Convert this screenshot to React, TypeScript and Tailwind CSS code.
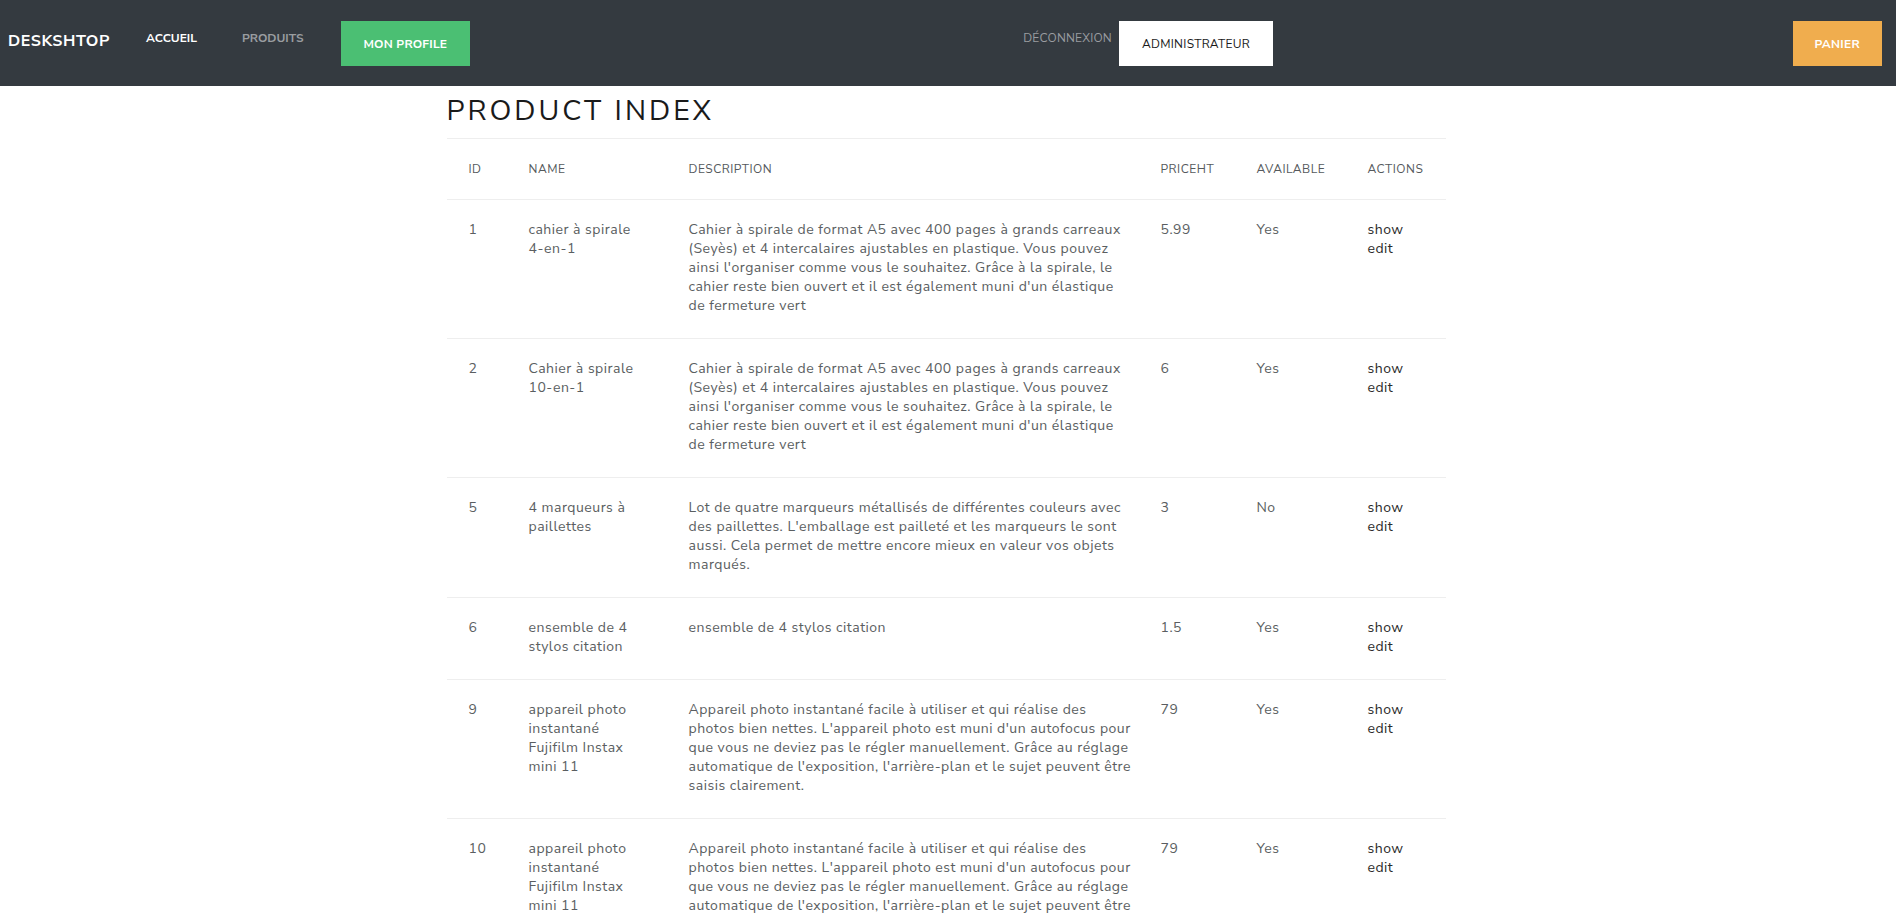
import React from "react";

type Row = {
  id: string;
  name: string[];
  desc: string[];
  price: string;
  available: string;
};

const spirale = [
  "Cahier à spirale de format A5 avec 400 pages à grands carreaux",
  "(Seyès) et 4 intercalaires ajustables en plastique. Vous pouvez",
  "ainsi l'organiser comme vous le souhaitez. Grâce à la spirale, le",
  "cahier reste bien ouvert et il est également muni d'un élastique",
  "de fermeture vert",
];

const appareil = [
  "Appareil photo instantané facile à utiliser et qui réalise des",
  "photos bien nettes. L'appareil photo est muni d'un autofocus pour",
  "que vous ne deviez pas le régler manuellement. Grâce au réglage",
  "automatique de l'exposition, l'arrière-plan et le sujet peuvent être",
  "saisis clairement.",
];

const rows: Row[] = [
  { id: "1", name: ["cahier à spirale", "4-en-1"], desc: spirale, price: "5.99", available: "Yes" },
  { id: "2", name: ["Cahier à spirale", "10-en-1"], desc: spirale, price: "6", available: "Yes" },
  {
    id: "5",
    name: ["4 marqueurs à", "paillettes"],
    desc: [
      "Lot de quatre marqueurs métallisés de différentes couleurs avec",
      "des paillettes. L'emballage est pailleté et les marqueurs le sont",
      "aussi. Cela permet de mettre encore mieux en valeur vos objets",
      "marqués.",
    ],
    price: "3",
    available: "No",
  },
  {
    id: "6",
    name: ["ensemble de 4", "stylos citation"],
    desc: ["ensemble de 4 stylos citation"],
    price: "1.5",
    available: "Yes",
  },
  {
    id: "9",
    name: ["appareil photo", "instantané", "Fujifilm Instax", "mini 11"],
    desc: appareil,
    price: "79",
    available: "Yes",
  },
  {
    id: "10",
    name: ["appareil photo", "instantané", "Fujifilm Instax", "mini 11"],
    desc: appareil,
    price: "79",
    available: "Yes",
  },
];

const font = { fontFamily: '"Nunito Sans", Lato, "Open Sans", sans-serif' };

function Lines({ lines }: { lines: string[] }) {
  return (
    <>
      {lines.map((l, i) => (
        <span key={i} className="block whitespace-nowrap">
          {l}
        </span>
      ))}
    </>
  );
}

export default function App() {
  return (
    <div className="min-h-screen bg-white" style={font}>
      <nav className="flex h-[86px] items-start bg-[#343a40]">
        <div className="mt-[31px] pl-[8px] text-[16px] font-bold leading-[20px] tracking-[0.6px] text-white">
          DESKSHTOP
        </div>
        <a className="ml-[36px] mt-[30px] text-[12px] font-bold leading-[16px] text-white">
          ACCUEIL
        </a>
        <a className="ml-[45px] mt-[30px] text-[12px] font-bold leading-[16px] text-[#9a9da0]">
          PRODUITS
        </a>
        <button className="ml-[37px] mt-[21px] flex h-[45px] items-center bg-[#4bbf73] px-[23px] text-[12px] font-bold tracking-[0.2px] text-white">
          MON PROFILE
        </button>
        <a className="ml-[553px] mt-[30px] text-[12px] leading-[16px] tracking-[0.2px] text-[#9a9da0]">
          DÉCONNEXION
        </a>
        <button className="ml-[7px] mt-[21px] flex h-[45px] items-center bg-white px-[23px] text-[12px] tracking-[0.3px] text-[#1a1a1a]">
          ADMINISTRATEUR
        </button>
        <button className="ml-auto mr-[14px] mt-[21px] flex h-[45px] items-center bg-[#f0ad4e] px-[22px] text-[12px] font-bold tracking-[0.3px] text-white">
          PANIER
        </button>
      </nav>

      <main className="mx-auto w-[1003px]">
        <div className="w-[999px]">
          <h1 className="border-b border-[#eeeeee] pb-[10px] pt-[8px] text-[28.5px] font-normal leading-[34px] tracking-[3px] text-[#1a1a1a]">
            PRODUCT INDEX
          </h1>
          <table className="w-full table-fixed border-collapse text-left">
            <colgroup>
              <col className="w-[60px]" />
              <col className="w-[160px]" />
              <col className="w-[472px]" />
              <col className="w-[96px]" />
              <col className="w-[111px]" />
              <col className="w-[100px]" />
            </colgroup>
            <thead>
              <tr className="h-[60px] border-b border-[#eeeeee] text-[12px] tracking-[0.5px] text-[#55595c]">
                <th className="px-[22px] font-normal">ID</th>
                <th className="px-[22px] font-normal">NAME</th>
                <th className="px-[22px] font-normal">DESCRIPTION</th>
                <th className="px-[22px] font-normal">PRICEHT</th>
                <th className="px-[22px] font-normal">AVAILABLE</th>
                <th className="px-[22px] font-normal">ACTIONS</th>
              </tr>
            </thead>
            <tbody className="text-[14px] leading-[19px] tracking-[0.5px] text-[#5a5e61]">
              {rows.map((r) => (
                <tr key={r.id} className="border-b border-[#eeeeee] align-top">
                  <td className="px-[22px] pb-[23px] pt-[20px]">{r.id}</td>
                  <td className="px-[22px] pb-[23px] pt-[20px]">
                    <Lines lines={r.name} />
                  </td>
                  <td className="px-[22px] pb-[23px] pt-[20px]">
                    <Lines lines={r.desc} />
                  </td>
                  <td className="px-[22px] pb-[23px] pt-[20px]">{r.price}</td>
                  <td className="px-[22px] pb-[23px] pt-[20px]">{r.available}</td>
                  <td className="px-[22px] pb-[23px] pt-[20px] text-[#2a2a2a]">
                    <a className="block">show</a>
                    <a className="block">edit</a>
                  </td>
                </tr>
              ))}
            </tbody>
          </table>
        </div>
      </main>
    </div>
  );
}
